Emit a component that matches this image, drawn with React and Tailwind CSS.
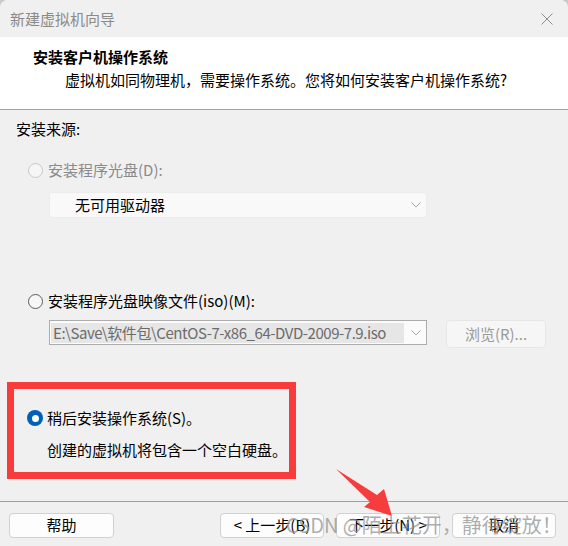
import React from "react";

const FONT = "font-['Noto_Sans_CJK_SC','Noto_Sans',sans-serif]";

function Radio({ state }) {
  // state: "disabled" | "off" | "on"
  if (state === "on") {
    return (
      <span className="w-[16px] h-[16px] rounded-full bg-[#005fb8] flex items-center justify-center shrink-0">
        <span className="w-[7px] h-[7px] rounded-full bg-white" />
      </span>
    );
  }
  return (
    <span
      className={`w-[15px] h-[15px] rounded-full border shrink-0 ${
        state === "disabled" ? "border-[#c8c8c8] bg-[#f6f6f6]" : "border-[#5c5c5c] bg-[#f7f7f7]"
      }`}
    />
  );
}

function Chevron() {
  return (
    <svg width="10" height="6" viewBox="0 0 10 6" className="shrink-0">
      <path d="M0.5 0.5 L5 5 L9.5 0.5" fill="none" stroke="#a6a6a6" strokeWidth="1" />
    </svg>
  );
}

function Btn({ children, className = "" }) {
  return (
    <div
      className={`h-[25px] rounded-[4px] border border-[#d1d1d1] bg-[#fdfdfd] flex items-center justify-center text-[15px] text-black ${className}`}
    >
      {children}
    </div>
  );
}

export default function App() {
  return (
    <div className={`relative w-[568px] h-[546px] overflow-hidden bg-[#c9c9c9] ${FONT}`}>
      <div className="w-[568px] h-[546px] rounded-t-[8px] bg-[#f0f0f0] flex flex-col overflow-hidden">
        {/* Title bar */}
        <div className="h-[37px] shrink-0 flex items-center justify-between pl-[10px] pr-[15px] bg-[#f0f0f0]">
          <span className="text-[15px] leading-[20px] text-[#8a8a8a]">新建虚拟机向导</span>
          <svg width="12" height="12" viewBox="0 0 12 12">
            <path d="M0.5 0.5 L11.5 11.5 M11.5 0.5 L0.5 11.5" stroke="#8f8f8f" strokeWidth="1" />
          </svg>
        </div>

        {/* Header */}
        <div className="h-[72px] shrink-0 bg-white pt-[10px] pl-[33px]">
          <div className="text-[15px] leading-[20px] font-bold text-black">安装客户机操作系统</div>
          <div className="mt-[3px] pl-[32px] text-[15px] leading-[20px] text-black">
            虚拟机如同物理机，需要操作系统。您将如何安装客户机操作系统?
          </div>
        </div>
        <div className="h-px shrink-0 bg-[#a0a0a0]" />

        {/* Body */}
        <div className="h-[391px] shrink-0 flex flex-col pt-[9px] text-[15px] leading-[20px]">
          <div className="pl-[16px] text-black">安装来源:</div>

          <div className="mt-[21px] pl-[28px] flex items-center gap-[5px] h-[20px] text-[#8a8a8a]">
            <Radio state="disabled" />
            <span>安装程序光盘(D):</span>
          </div>
          <div className="mt-[12px] ml-[49px] w-[378px] h-[26px] rounded-[3px] border border-[#ececec] bg-[#f9f9f9] flex items-center justify-between pl-[25px] pr-[5px]">
            <span className="text-black">无可用驱动器</span>
            <Chevron />
          </div>

          <div className="mt-[73px] pl-[28px] flex items-center gap-[5px] h-[20px] text-black">
            <Radio state="off" />
            <span>安装程序光盘映像文件(iso)(M):</span>
          </div>
          <div className="mt-[9px] flex items-start">
            <div className="ml-[49px] w-[378px] h-[25px] border border-[#acacac] bg-[#fbfbfb] flex items-center pl-[1px] pr-[5px]">
              <div className="w-[353px] h-[20px] bg-[#e6e6e6] pl-[2px] text-[#6b6b6b] whitespace-nowrap tracking-[-0.45px]">
                E:\Save\软件包\CentOS-7-x86_64-DVD-2009-7.9.iso
              </div>
              <div className="flex-1 flex justify-end">
                <Chevron />
              </div>
            </div>
            <div className="ml-[19px] w-[100px] h-[28px] rounded-[4px] border border-[#e6e6e6] bg-[#f6f6f6] flex items-center justify-center text-[#9a9a9a]">
              浏览(R)...
            </div>
          </div>

          {/* Highlighted option */}
          <div className="mt-[34px] ml-[7px] w-[289px] h-[97px] border-[7px] border-[#f83b3b] pt-[19px] pl-[13px]">
            <div className="flex items-center gap-[4px] h-[20px] text-black">
              <Radio state="on" />
              <span>稍后安装操作系统(S)。</span>
            </div>
            <div className="mt-[12px] pl-[20px] text-black">创建的虚拟机将包含一个空白硬盘。</div>
          </div>
        </div>
        <div className="h-px shrink-0 bg-[#a0a0a0]" />

        {/* Footer */}
        <div className="flex-1 flex items-start pt-[11px] pl-[9px] pr-[12px]">
          <Btn className="w-[105px]">帮助</Btn>
          <div className="flex-1" />
          <div className="flex gap-[12px]">
            <Btn className="w-[104px]">&lt; 上一步(B)</Btn>
            <Btn className="w-[104px]">下一步(N) &gt;</Btn>
            <Btn className="w-[104px]">取消</Btn>
          </div>
        </div>
      </div>

      {/* Annotation arrow */}
      <svg className="absolute left-0 top-0 pointer-events-none" width="568" height="546">
        <polygon
          points="336,469 377,495 384,489 392,516 364,507 370,502"
          fill="#f53d3d"
        />
      </svg>

      {/* Watermark */}
      <div className="absolute left-[286px] top-[511px] text-[20px] leading-[28px] text-[#939393]/75 whitespace-nowrap pointer-events-none">
        CSDN @陌上花开，静待绽放！
      </div>
    </div>
  );
}
